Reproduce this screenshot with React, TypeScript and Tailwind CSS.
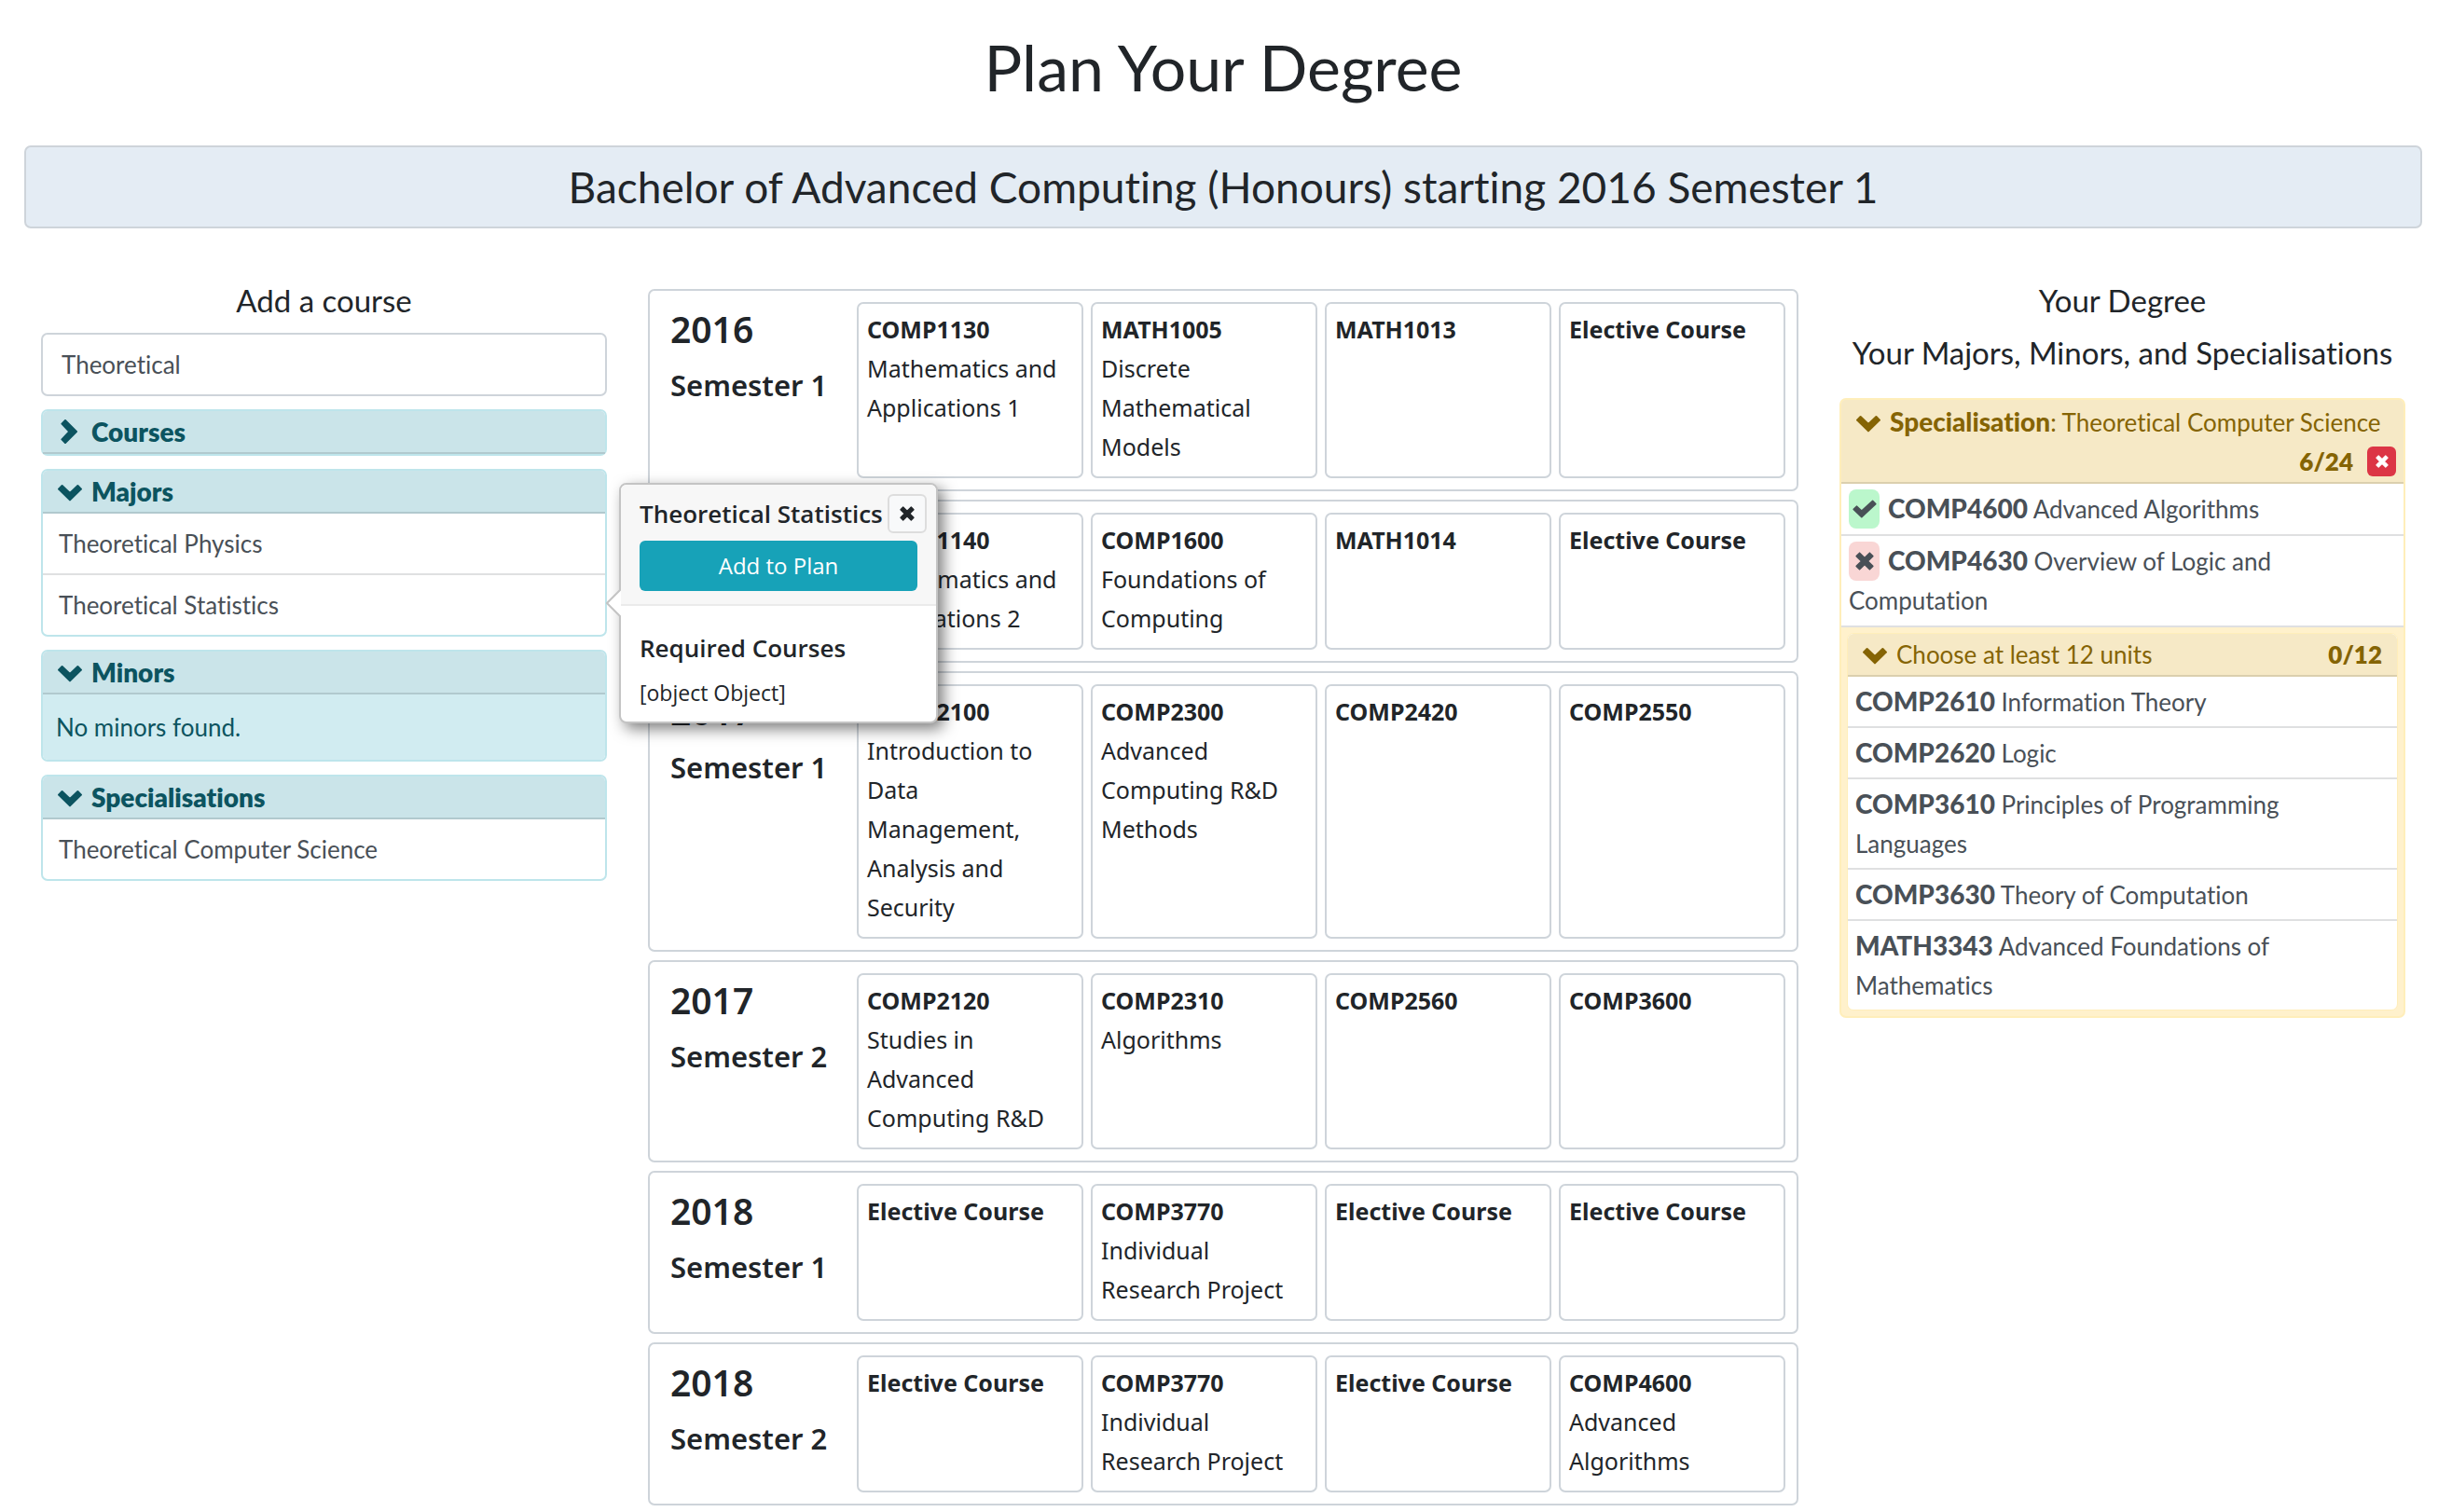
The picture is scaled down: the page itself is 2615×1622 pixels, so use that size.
import type { ReactNode } from "react";

type Course = { code: string; title?: string };
type Session = { year: string; semester: string; courses: Course[] };

const elective: Course = { code: "Elective Course" };

const sessions: Session[] = [
  {
    year: "2016",
    semester: "Semester 1",
    courses: [
      { code: "COMP1130", title: "Mathematics and Applications 1" },
      { code: "MATH1005", title: "Discrete Mathematical Models" },
      { code: "MATH1013" },
      elective,
    ],
  },
  {
    year: "2016",
    semester: "Semester 2",
    courses: [
      { code: "COMP1140", title: "Mathematics and Applications 2" },
      { code: "COMP1600", title: "Foundations of Computing" },
      { code: "MATH1014" },
      elective,
    ],
  },
  {
    year: "2017",
    semester: "Semester 1",
    courses: [
      { code: "COMP2100", title: "Introduction to Data Management, Analysis and Security" },
      { code: "COMP2300", title: "Advanced Computing R&D Methods" },
      { code: "COMP2420" },
      { code: "COMP2550" },
    ],
  },
  {
    year: "2017",
    semester: "Semester 2",
    courses: [
      { code: "COMP2120", title: "Studies in Advanced Computing R&D" },
      { code: "COMP2310", title: "Algorithms" },
      { code: "COMP2560" },
      { code: "COMP3600" },
    ],
  },
  {
    year: "2018",
    semester: "Semester 1",
    courses: [elective, { code: "COMP3770", title: "Individual Research Project" }, elective, elective],
  },
  {
    year: "2018",
    semester: "Semester 2",
    courses: [
      elective,
      { code: "COMP3770", title: "Individual Research Project" },
      elective,
      { code: "COMP4600", title: "Advanced Algorithms" },
    ],
  },
];

const options: Course[] = [
  { code: "COMP2610", title: "Information Theory" },
  { code: "COMP2620", title: "Logic" },
  { code: "COMP3610", title: "Principles of Programming Languages" },
  { code: "COMP3630", title: "Theory of Computation" },
  { code: "MATH3343", title: "Advanced Foundations of Mathematics" },
];

function Chevron({ open = true }: { open?: boolean }) {
  return (
    <svg
      viewBox="0 0 26 26"
      className="size-[26px] shrink-0"
      fill="currentColor"
      stroke="currentColor"
      strokeWidth="2"
      strokeLinejoin="round"
      aria-hidden="true"
    >
      <path d={open ? "M4.6 7 L13 15 L21.4 7 L25 10.6 L13 22.4 L1 10.6 Z" : "M8 1 L20 13 L8 25 L4.4 21.4 L12.4 13 L4.4 4.6 Z"} />
    </svg>
  );
}

function Cross({ className }: { className: string }) {
  return (
    <svg
      viewBox="0 0 20 20"
      className={className}
      fill="currentColor"
      stroke="currentColor"
      strokeWidth="1.6"
      strokeLinejoin="round"
      aria-hidden="true"
    >
      <path d="M4.6 1.2 L10 6.6 L15.4 1.2 L18.8 4.6 L13.4 10 L18.8 15.4 L15.4 18.8 L10 13.4 L4.6 18.8 L1.2 15.4 L6.6 10 L1.2 4.6 Z" />
    </svg>
  );
}

function Check({ className }: { className: string }) {
  return (
    <svg
      viewBox="0 0 26 20"
      className={className}
      fill="currentColor"
      stroke="currentColor"
      strokeWidth="1.6"
      strokeLinejoin="round"
      aria-hidden="true"
    >
      <path d="M21.6 1.4 L24.8 4.6 L9.8 18.6 L1.2 10.4 L4.4 7.2 L9.8 12 Z" />
    </svg>
  );
}

function ResultCard({ title, open = true, children }: { title: string; open?: boolean; children?: ReactNode }) {
  return (
    <section className="rounded-[7px] border-2 border-[#bee5eb] bg-white">
      <h3 className="rounded-t-[5px] border-b-2 border-[#b1c9ce] bg-[#cae4e9] text-[#0c5460]">
        <button
          type="button"
          aria-expanded={open}
          className="flex h-[44px] w-full items-center gap-2.5 px-4 text-left text-[28px] font-extrabold"
        >
          <Chevron open={open} />
          {title}
        </button>
      </h3>
      {children}
    </section>
  );
}

function Popover() {
  return (
    <div
      role="dialog"
      aria-label="Theoretical Statistics"
      className="absolute -top-[99px] left-full z-10 ml-[15px] w-[342px] rounded-lg border-2 border-[#c4c4c4] bg-white font-['Open_Sans','Noto_Sans',sans-serif] text-[#212529] shadow-[6px_6px_16px_rgba(0,0,0,0.5)]"
    >
      <svg viewBox="0 0 16 30" className="absolute top-[112px] -left-4 h-[30px] w-4" aria-hidden="true">
        <path d="M16 0 L1 15 L16 30" fill="#ffffff" stroke="#c4c4c4" strokeWidth="2" />
      </svg>
      <div className="rounded-t-md border-b-2 border-[#ebebeb] bg-[#f7f7f7] px-5 pt-2.5 pb-[14px]">
        <div className="-mr-2.5 flex h-[42px] items-center justify-between">
          <h4 className="text-[26px] leading-[42px] font-semibold whitespace-nowrap">Theoretical Statistics</h4>
          <button
            type="button"
            aria-label="Close"
            className="flex size-[42px] shrink-0 items-center justify-center rounded-md border-2 border-[#dddddd] bg-[#f8f9fa]"
          >
            <Cross className="size-4" />
          </button>
        </div>
        <button type="button" className="mt-2 h-[54px] w-full rounded-md bg-[#17a2b8] text-[24px] text-white">
          Add to Plan
        </button>
      </div>
      <div className="px-5 pt-6 pb-3">
        <h4 className="text-[26px] leading-[42px] font-semibold">Required Courses</h4>
        <p className="pt-2 text-[23px] leading-[38px]">[object Object]</p>
      </div>
    </div>
  );
}

function SearchColumn() {
  return (
    <aside className="flex flex-col gap-[14px] px-[18px]">
      <div>
        <label htmlFor="course-search" className="block pb-[14px] text-center text-[33px] leading-[42px]">
          Add a course
        </label>
        <input
          id="course-search"
          type="text"
          defaultValue="Theoretical"
          className="h-[68px] w-full rounded-[7px] border-2 border-[#ced4da] bg-white px-5 text-[#495057] outline-none"
        />
      </div>
      <ResultCard title="Courses" open={false} />
      <ResultCard title="Majors">
        <ul className="text-[#495057]">
          <li className="border-b-2 border-[#dfe0e1]">
            <a href="#physics" className="block px-[17px] py-[11px]">Theoretical Physics</a>
          </li>
          <li className="relative">
            <a href="#statistics" className="block px-[17px] py-[11px]">Theoretical Statistics</a>
            <Popover />
          </li>
        </ul>
      </ResultCard>
      <ResultCard title="Minors">
        <p className="rounded-b-[5px] bg-[#d1ecf1] px-[14px] py-[14px] text-[#0c5460]">No minors found.</p>
      </ResultCard>
      <ResultCard title="Specialisations">
        <ul className="text-[#495057]">
          <li>
            <a href="#tcs" className="block px-[17px] py-[11px]">Theoretical Computer Science</a>
          </li>
        </ul>
      </ResultCard>
    </aside>
  );
}

function SessionRow({ session }: { session: Session }) {
  return (
    <section className="flex rounded-[7px] border-2 border-[#ced4da] bg-white p-3">
      <div className="w-[210px] shrink-0 pt-1 pl-2.5 font-semibold">
        <h3 className="text-[39px] leading-[50px]">{session.year}</h3>
        <h4 className="pt-[14px] text-[31px] leading-[42px]">{session.semester}</h4>
      </div>
      <div className="grid min-w-0 flex-1 grid-cols-4 gap-2">
        {session.courses.map((course, i) => (
          <article key={i} className="rounded-[7px] border-2 border-[#ced4da] px-[9px] pt-[6px] pb-[11px] text-[25px]">
            <h5 className="font-bold whitespace-nowrap">{course.code}</h5>
            {course.title && <p>{course.title}</p>}
          </article>
        ))}
      </div>
    </section>
  );
}

function DegreeColumn() {
  return (
    <aside className="px-[18px]">
      <h2 className="text-center text-[33px] leading-[42px]">Your Degree</h2>
      <h3 className="pt-[14px] text-center text-[33px] leading-[42px] whitespace-nowrap">
        Your Majors, Minors, and Specialisations
      </h3>
      <section className="mt-7 rounded-[7px] border-2 border-[#ffeeba] bg-[#fff1cc] text-[#495057]">
        <div className="rounded-t-[5px] border-b-2 border-[#dbcfae] bg-[#f6e9c6] px-2 pt-[3px] pb-px text-[#856404]">
          <button
            type="button"
            aria-expanded="true"
            className="flex h-[42px] w-full items-center gap-2.5 pl-2 text-left whitespace-nowrap"
          >
            <Chevron />
            <span>
              <strong className="text-[28px] leading-none font-black">Specialisation</strong>: Theoretical Computer Science
            </span>
          </button>
          <div className="flex h-[42px] items-center justify-end gap-[15px]">
            <strong className="font-extrabold">6/24</strong>
            <button
              type="button"
              aria-label="Remove specialisation"
              className="flex h-8 w-[31px] items-center justify-center rounded-md bg-[#dc3545] text-white"
            >
              <Cross className="size-[14px]" />
            </button>
          </div>
        </div>
        <ul className="bg-white">
          <li className="border-b-2 border-[#dfe0e1] px-2 pt-[6px] pb-[6px]">
            <span className="mr-[9px] inline-flex h-[42px] w-[33px] items-center justify-center rounded-lg bg-[#bbf7cc] align-top">
              <Check className="h-5 w-[26px]" />
            </span>
            <strong className="text-[28px] leading-none font-black">COMP4600</strong> Advanced Algorithms
          </li>
          <li className="border-b-2 border-[#dfe0e1] px-2 pt-[6px] pb-[6px]">
            <span className="mr-[9px] inline-flex h-[42px] w-[33px] items-center justify-center rounded-lg bg-[#f9d6d5] align-top">
              <Cross className="size-5" />
            </span>
            <strong className="text-[28px] leading-none font-black">COMP4630</strong> Overview of Logic and Computation
          </li>
        </ul>
        <div className="p-1.5">
          <section className="rounded-[7px] border border-[#ffeeba] bg-white">
            <h4 className="rounded-t-md border-b-2 border-[#dbcfae] bg-[#f6e9c6] text-[#856404]">
              <button
                type="button"
                aria-expanded="true"
                className="flex h-[44px] w-full items-center gap-2.5 pr-4 pl-4 text-left"
              >
                <Chevron />
                <span className="flex-1">Choose at least 12 units</span>
                <strong className="font-extrabold">0/12</strong>
              </button>
            </h4>
            <ul className="divide-y-2 divide-[#dfe0e1]">
              {options.map((option) => (
                <li key={option.code} className="px-2 pt-[6px] pb-[5px]">
                  <strong className="text-[28px] leading-none font-black">{option.code}</strong> {option.title}
                </li>
              ))}
            </ul>
          </section>
        </div>
      </section>
    </aside>
  );
}

export default function App() {
  return (
    <main className="min-h-screen bg-white pr-[17px] pl-[26px] font-['Lato',sans-serif] text-[26px] leading-[42px] text-[#212529] [font-variant-ligatures:none]">
      <h1 className="pt-[30px] text-center text-[68px] leading-[84px]">Plan Your Degree</h1>
      <h2 className="mt-[42px] rounded-[7px] border-2 border-[#ced4da] bg-[#e4ecf4] py-[13px] text-center text-[46px] leading-[59px]">
        Bachelor of Advanced Computing (Honours) starting 2016 Semester 1
      </h2>
      <div className="grid grid-cols-[minmax(0,1fr)_minmax(0,2fr)_minmax(0,1fr)] pt-[56px]">
        <SearchColumn />
        <div className="flex flex-col gap-[9px] px-[26px] pt-[9px] font-['Noto_Sans',sans-serif]">
          {sessions.map((session, i) => (
            <SessionRow key={i} session={session} />
          ))}
        </div>
        <DegreeColumn />
      </div>
    </main>
  );
}
